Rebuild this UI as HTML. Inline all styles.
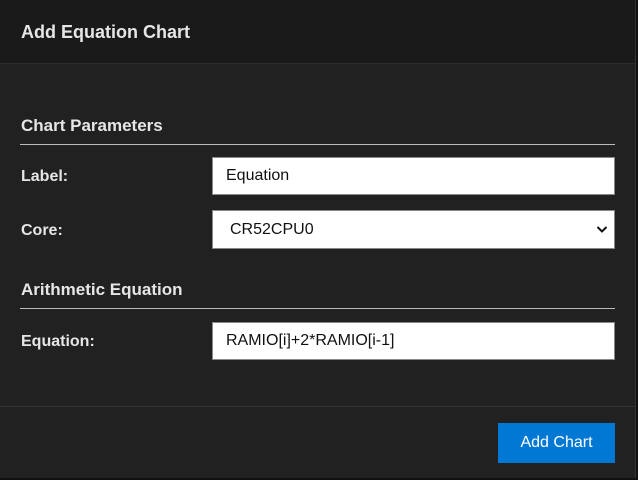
<!DOCTYPE html>
<html><head><style>
body{margin:0;width:638px;height:480px;background:#111;overflow:hidden;font-family:"Liberation Sans",sans-serif}
.d{position:absolute;left:0;top:0;width:635px;height:478px;background:#212121;border-right:1px solid #333}
.h{position:absolute;left:0;top:0;width:635px;height:63px;background:#1a1a1a;border-bottom:1px solid #2c2c2c}
.t{position:absolute;color:#e6e6e6;font-weight:bold}
.l{position:absolute;color:#e6e6e6;font-size:16px;font-weight:bold}
.ln{position:absolute;left:20px;width:595px;height:1px;background:#bbb}
.i{position:absolute;left:212px;width:403px;background:#fff;border:1px solid #888;box-sizing:border-box;font-size:16px;color:#111;padding-left:13px;display:flex;align-items:center}
.f{position:absolute;left:0;top:406px;width:635px;height:1px;background:#333}
.b{position:absolute;left:498px;top:423px;width:117px;height:40px;background:#0078d4;color:#fff;font-size:16px;display:flex;align-items:center;justify-content:center}
</style></head><body>
<div class="d"></div>
<div class="h"></div>
<div class="t" style="left:21px;top:22px;font-size:18px">Add Equation Chart</div>
<div class="t" style="left:21px;top:116px;font-size:17px">Chart Parameters</div>
<div class="ln" style="top:144px"></div>
<div class="l" style="left:21px;top:168px">Label:</div>
<div class="i" style="top:157px;height:38px">Equation</div>
<div class="l" style="left:21px;top:222px">Core:</div>
<div class="i" style="top:210px;height:39px;padding-left:17px">CR52CPU0
<svg style="position:absolute;right:6px;top:14px" width="12" height="9" viewBox="0 0 12 9"><path d="M1.5 2l4.5 4.5 4.5-4.5" stroke="#111" stroke-width="2" fill="none"/></svg></div>
<div class="t" style="left:21px;top:280px;font-size:17px">Arithmetic Equation</div>
<div class="ln" style="top:308px"></div>
<div class="l" style="left:21px;top:333px">Equation:</div>
<div class="i" style="top:322px;height:38px">RAMIO[i]+2*RAMIO[i-1]</div>
<div class="f"></div>
<div class="b">Add Chart</div>
</body></html>
